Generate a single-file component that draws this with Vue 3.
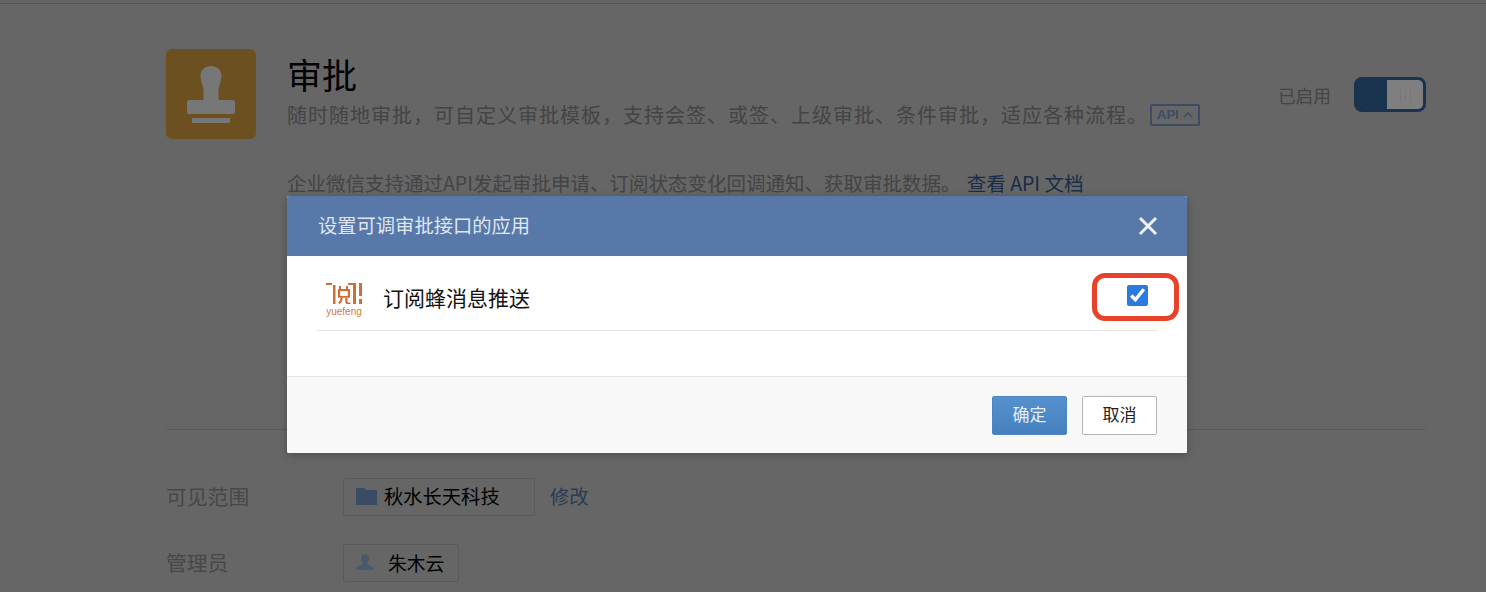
<script setup>
import { ref } from "vue";

const checked = ref(true);
</script>

<template>
  <div class="page">
    <div class="top-line"></div>
    <section class="app-head">
      <div class="app-icon">
        <svg width="90" height="90" viewBox="0 0 90 90">
          <path
            d="M45 17c6 0 10.500 4 10.500 10 0 5-2.500 9-3 14-.2 3 0 7 0 10h-15c0-3 .2-7 0-10-.5-5-3-9-3-14 0-6 4.500-10 10.500-10z"
            fill="#eee"
          />
          <rect x="21" y="51" width="48" height="14" rx="2" fill="#eee" />
          <rect x="26" y="69" width="38" height="5" fill="#eee" />
        </svg>
      </div>
      <div class="app-info">
        <h1>审批</h1>
        <p class="desc">
          <span>随时随地审批，可自定义审批模板，支持会签、或签、上级审批、条件审批，适应各种流程。</span>
          <span class="api-tag">
            API
            <svg width="10" height="6" viewBox="0 0 10 6">
              <path d="M1 5l4-4 4 4" fill="none" stroke="#7898c8" stroke-width="1.500" />
            </svg>
          </span>
        </p>
        <p class="api-note">
          企业微信支持通过API发起审批申请、订阅状态变化回调通知、获取审批数据。
          <a class="link">查看 API 文档</a>
        </p>
      </div>
      <div class="status">
        <span>已启用</span>
        <div class="switch">
          <div class="knob">
            <i></i><i></i><i></i>
          </div>
        </div>
      </div>
    </section>

    <section class="details">
      <div class="row">
        <label>可见范围</label>
        <div class="tag tag-wide">
          <svg width="21" height="18" viewBox="0 0 21 18">
            <path d="M0 1h8l2 2h11v15H0z" fill="#7498c8" />
          </svg>
          <span>秋水长天科技</span>
        </div>
        <a class="edit">修改</a>
      </div>
      <div class="row">
        <label>管理员</label>
        <div class="tag tag-admin">
          <svg width="18" height="18" viewBox="0 0 20 18">
            <path
              d="M10 0c3 0 4.500 2 4.500 4.500 0 2.500-1 4.500-2 5.500v1.500c2 1 7 2 7.500 6.500H0c.5-4.500 5.500-5.500 7.500-6.500V10c-1-1-2-3-2-5.500C5.500 2 7 0 10 0z"
              fill="#90b4e0"
            />
          </svg>
          <span class="admin">朱木云</span>
        </div>
      </div>
    </section>

    <div class="mask">
      <div class="dialog">
        <header class="dialog-head">
          <span class="dialog-title">设置可调审批接口的应用</span>
          <svg class="close" width="20" height="20" viewBox="0 0 20 20">
            <path d="M2 2l16 16M18 2L2 18" stroke="#eef1f6" stroke-width="3" />
          </svg>
        </header>
        <div class="dialog-body">
          <div class="app-row">
            <div class="logo">
              <svg width="36" height="21" viewBox="0 0 36 21">
                <g fill="#cf6f38">
                  <rect x="0" y="0" width="6" height="2" />
                  <rect x="7" y="2" width="2.500" height="19" />
                  <rect x="22" y="0" width="8" height="2" />
                  <rect x="27" y="2" width="3" height="19" />
                  <rect x="13" y="3" width="2" height="3" />
                  <rect x="20" y="3" width="2" height="3" />
                  <path d="M12 6h12v7h-2.200V8h-7.600v5H12z" />
                  <path d="M12 13h12v1.800H12z" />
                  <path d="M14.500 14.800h2.200c0 3-1 5-3.500 6.200l-1.200-1.500c1.700-1 2.500-2.500 2.500-4.700z" />
                  <path d="M19.300 14.800h2.200v3.700c0 .7.300 1 1 1h2v1.500h-2.800c-1.700 0-2.400-.8-2.400-2.300z" />
                  <rect x="33" y="0" width="3" height="13" />
                  <rect x="33" y="16" width="3" height="5" />
                </g>
              </svg>
              <span>yuefeng</span>
            </div>
            <span class="app-name">订阅蜂消息推送</span>
            <div class="check-wrap">
              <input v-model="checked" type="checkbox" class="check" />
            </div>
            <div class="highlight"></div>
          </div>
        </div>
        <footer class="dialog-foot">
          <button class="btn primary">确定</button>
          <button class="btn">取消</button>
        </footer>
      </div>
    </div>
  </div>
</template>

<style scoped>
.page {
  position: relative;
  height: 592px;
  overflow: hidden;
  box-sizing: border-box;
  padding: 3px 60px 0 166px;
  background: #ccc;
  font-family: "Noto Sans CJK SC", "Liberation Sans", sans-serif;
  color: #8e8e8e;
}

.top-line {
  height: 1px;
  margin: 0 -60px 0 -166px;
  background: #aaa;
}

.app-head {
  display: flex;
  height: 380px;
  margin-top: 45px;
  border-bottom: 1px solid #b4b4b4;
}

.app-icon {
  width: 90px;
  height: 90px;
  flex: none;
  border-radius: 6px;
  background: #d9a13f;
}

.app-info {
  flex: 1;
  margin-left: 31px;
}

h1 {
  margin: 3px 0 0;
  font-size: 35px;
  line-height: 44px;
  font-weight: 400;
  color: #000;
}

.desc {
  display: flex;
  align-items: center;
  margin: 5px 0 0;
  font-size: 20px;
  line-height: 28px;
  letter-spacing: 1px;
  color: #888;
}

.api-tag {
  display: flex;
  align-items: center;
  gap: 4px;
  margin-left: 2px;
  box-sizing: border-box;
  width: 50px;
  height: 22px;
  padding-left: 5px;
  border: 2px solid #7898c8;
  border-radius: 2px;
  font-family: "Liberation Sans", sans-serif;
  font-size: 13px;
  font-weight: 700;
  letter-spacing: 0;
  color: #7898c8;
}

.api-note {
  margin: 40px 0 0;
  font-size: 19.500px;
  line-height: 28px;
  color: #888;
}

.link {
  margin-left: 2px;
  color: #345a8c;
}

.status {
  display: flex;
  align-items: flex-start;
  gap: 23px;
  padding-top: 28px;
  font-size: 17.700px;
  line-height: 36px;
  color: #888;
}

.switch {
  box-sizing: border-box;
  display: flex;
  justify-content: flex-end;
  width: 72px;
  height: 35px;
  border: 3px solid #34689f;
  border-radius: 8px;
  background: #34689f;
}

.knob {
  display: flex;
  align-items: center;
  justify-content: center;
  gap: 4px;
  width: 36px;
  border-radius: 0 5px 5px 0;
  background: #fff;
}

.knob i {
  width: 1px;
  height: 14px;
  background: #eee;
}

.details {
  padding-top: 48px;
}

.row {
  display: flex;
  align-items: center;
  height: 38px;
  margin-bottom: 28px;
  font-size: 19.300px;
}

.row label {
  width: 177px;
  flex: none;
  padding-bottom: 3px;
  font-size: 20.800px;
  color: #909090;
}

.tag {
  display: flex;
  align-items: center;
  box-sizing: border-box;
  height: 38px;
  padding: 0 12px 2px;
  border: 1px solid #b4b4b4;
  border-radius: 2px;
  color: #000;
}

.tag span {
  margin-left: 7px;
}

.tag .admin {
  margin-left: 14px;
  font-size: 18.800px;
}

.tag-wide {
  width: 192px;
}

.tag-admin {
  width: 116px;
}

.edit {
  margin-left: 15px;
  padding-bottom: 2px;
  color: #5078a8;
}

.mask {
  position: absolute;
  inset: 0;
  background: rgba(0, 0, 0, 0.5);
}

.dialog {
  position: absolute;
  left: 287px;
  top: 196px;
  width: 900px;
  border-radius: 2px;
  overflow: hidden;
  background: #fff;
  box-shadow: 0 2px 8px rgba(0, 0, 0, 0.25);
}

.dialog-head {
  display: flex;
  align-items: center;
  justify-content: space-between;
  height: 60px;
  padding: 0 29px 0 31px;
  background: #5878aa;
  color: #dfe6f0;
}

.dialog-title {
  padding-bottom: 3px;
  font-size: 19.300px;
}

.dialog-body {
  height: 121px;
  padding: 0 30px;
  border-bottom: 1px solid #e4e4e4;
  box-sizing: border-box;
}

.app-row {
  position: relative;
  display: flex;
  align-items: center;
  height: 75px;
  padding-top: 8px;
  border-bottom: 1px solid #e4e4e4;
  box-sizing: border-box;
}

.logo {
  display: flex;
  flex-direction: column;
  align-items: center;
  gap: 2px;
  width: 36px;
  margin: 6px 0 0 9px;
  font-family: "Liberation Sans", sans-serif;
  font-size: 10px;
  line-height: 12px;
  color: #cf7a42;
}

.logo svg {
  display: block;
}

.app-name {
  margin-left: 21px;
  font-size: 21px;
  color: #111;
}

.check-wrap {
  margin-left: auto;
  margin-right: 9px;
  margin-top: -4px;
  display: flex;
}

.check {
  width: 21px;
  height: 21px;
  margin: 0;
  accent-color: #2a7ae2;
}

.highlight {
  position: absolute;
  left: 775px;
  top: 17px;
  width: 87px;
  height: 48px;
  box-sizing: border-box;
  border: 5px solid #e8432a;
  border-radius: 13px;
}

.dialog-foot {
  display: flex;
  justify-content: flex-end;
  gap: 15px;
  height: 76px;
  padding: 19px 30px 0 0;
  box-sizing: border-box;
  background: #f8f8f8;
}

.btn {
  width: 75px;
  height: 39px;
  padding: 0 0 4px;
  border: 1px solid #b5b5b5;
  border-radius: 2px;
  background: #fff;
  font-family: inherit;
  font-size: 17px;
  color: #222;
}

.primary {
  border-color: #4a85c4;
  background: linear-gradient(#5590cf, #4580bf);
  color: #e6eef7;
}
</style>
